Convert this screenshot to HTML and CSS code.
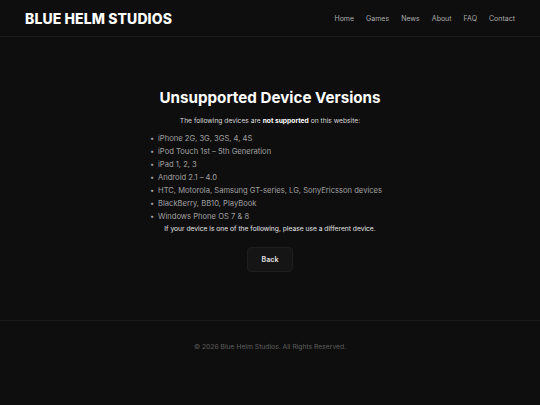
FILE: index.html
```html
<!DOCTYPE html>
<html lang="en">
<head>
<meta charset="utf-8">
<title>Unsupported Device Versions - Blue Helm Studios</title>
<link rel="stylesheet" href="styles.css">
</head>
<body>
<header class="site-header">
  <div class="logo">BLUE HELM STUDIOS</div>
  <nav class="nav">
    <a href="#">Home</a>
    <a href="#">Games</a>
    <a href="#">News</a>
    <a href="#">About</a>
    <a href="#">FAQ</a>
    <a href="#">Contact</a>
  </nav>
</header>
<main class="main">
  <section class="content">
    <h1 class="title">Unsupported Device Versions</h1>
    <p class="intro">The following devices are <strong>not supported</strong> on this website:</p>
    <ul class="devices">
      <li>iPhone 2G, 3G, 3GS, 4, 4S</li>
      <li>iPod Touch 1st – 5th Generation</li>
      <li>iPad 1, 2, 3</li>
      <li>Android 2.1 – 4.0</li>
      <li>HTC, Motorola, Samsung GT-series, LG, SonyEricsson devices</li>
      <li>BlackBerry, BB10, PlayBook</li>
      <li>Windows Phone OS 7 &amp; 8</li>
    </ul>
    <p class="note">If your device is one of the following, please use a different device.</p>
    <a class="back" href="#">Back</a>
  </section>
</main>
<footer class="site-footer">
  <p>© 2026 Blue Helm Studios. All Rights Reserved.</p>
</footer>
</body>
</html>
```
FILE: styles.css
```css
* { box-sizing: border-box; }
html, body { margin: 0; padding: 0; }
body {
  background: #0e0e0e;
  color: #e8e8e8;
  font-family: Inter, "Noto Sans", "Liberation Sans", sans-serif;
  min-height: 405px;
}
.site-header {
  height: 37px;
  border-bottom: 1px solid #1b1b1b;
  display: flex;
  align-items: center;
  justify-content: space-between;
  padding: 0 25px;
}
.logo {
  font-size: 14px;
  font-weight: 800;
  color: #ffffff;
  letter-spacing: 0.1px;
}
.nav {
  display: flex;
  gap: 12px;
}
.nav a {
  color: #acacac;
  text-decoration: none;
  font-size: 7px;
}
.main {
  height: 283px;
  display: flex;
  align-items: center;
  justify-content: center;
  padding-top: 3px;
}
.content {
  display: flex;
  flex-direction: column;
  align-items: center;
}
.title {
  margin: 0 0 8px;
  font-size: 15.2px;
  font-weight: 700;
  color: #ffffff;
  line-height: 20px;
}
.intro {
  margin: 0 0 6px;
  font-size: 6.7px;
  color: #d8d8d8;
  line-height: 10px;
}
.intro strong { color: #ffffff; font-weight: 700; }
.devices {
  margin: 0;
  padding: 0 8px 0 0;
  list-style: none;
  font-size: 7.6px;
  line-height: 13.1px;
  color: #a0a0a0;
}
.devices li {
  display: flex;
}
.devices li::before {
  content: "•";
  width: 8px;
  flex: none;
}
.note {
  margin: 0 0 12px;
  font-size: 6.7px;
  line-height: 12px;
  color: #e4e4e4;
}
.back {
  display: inline-block;
  padding: 7px 14px;
  font-size: 7px;
  font-weight: 700;
  color: #d8d8d8;
  text-decoration: none;
  background: #151515;
  border: 1px solid #1e1e1e;
  border-radius: 4px;
  line-height: 9px;
}
.site-footer {
  border-top: 1px solid #1b1b1b;
  height: 85px;
  display: flex;
  justify-content: center;
  padding-top: 21px;
}
.site-footer p {
  margin: 0;
  font-size: 6.75px;
  color: #5e5e5e;
  line-height: 10px;
}
```
